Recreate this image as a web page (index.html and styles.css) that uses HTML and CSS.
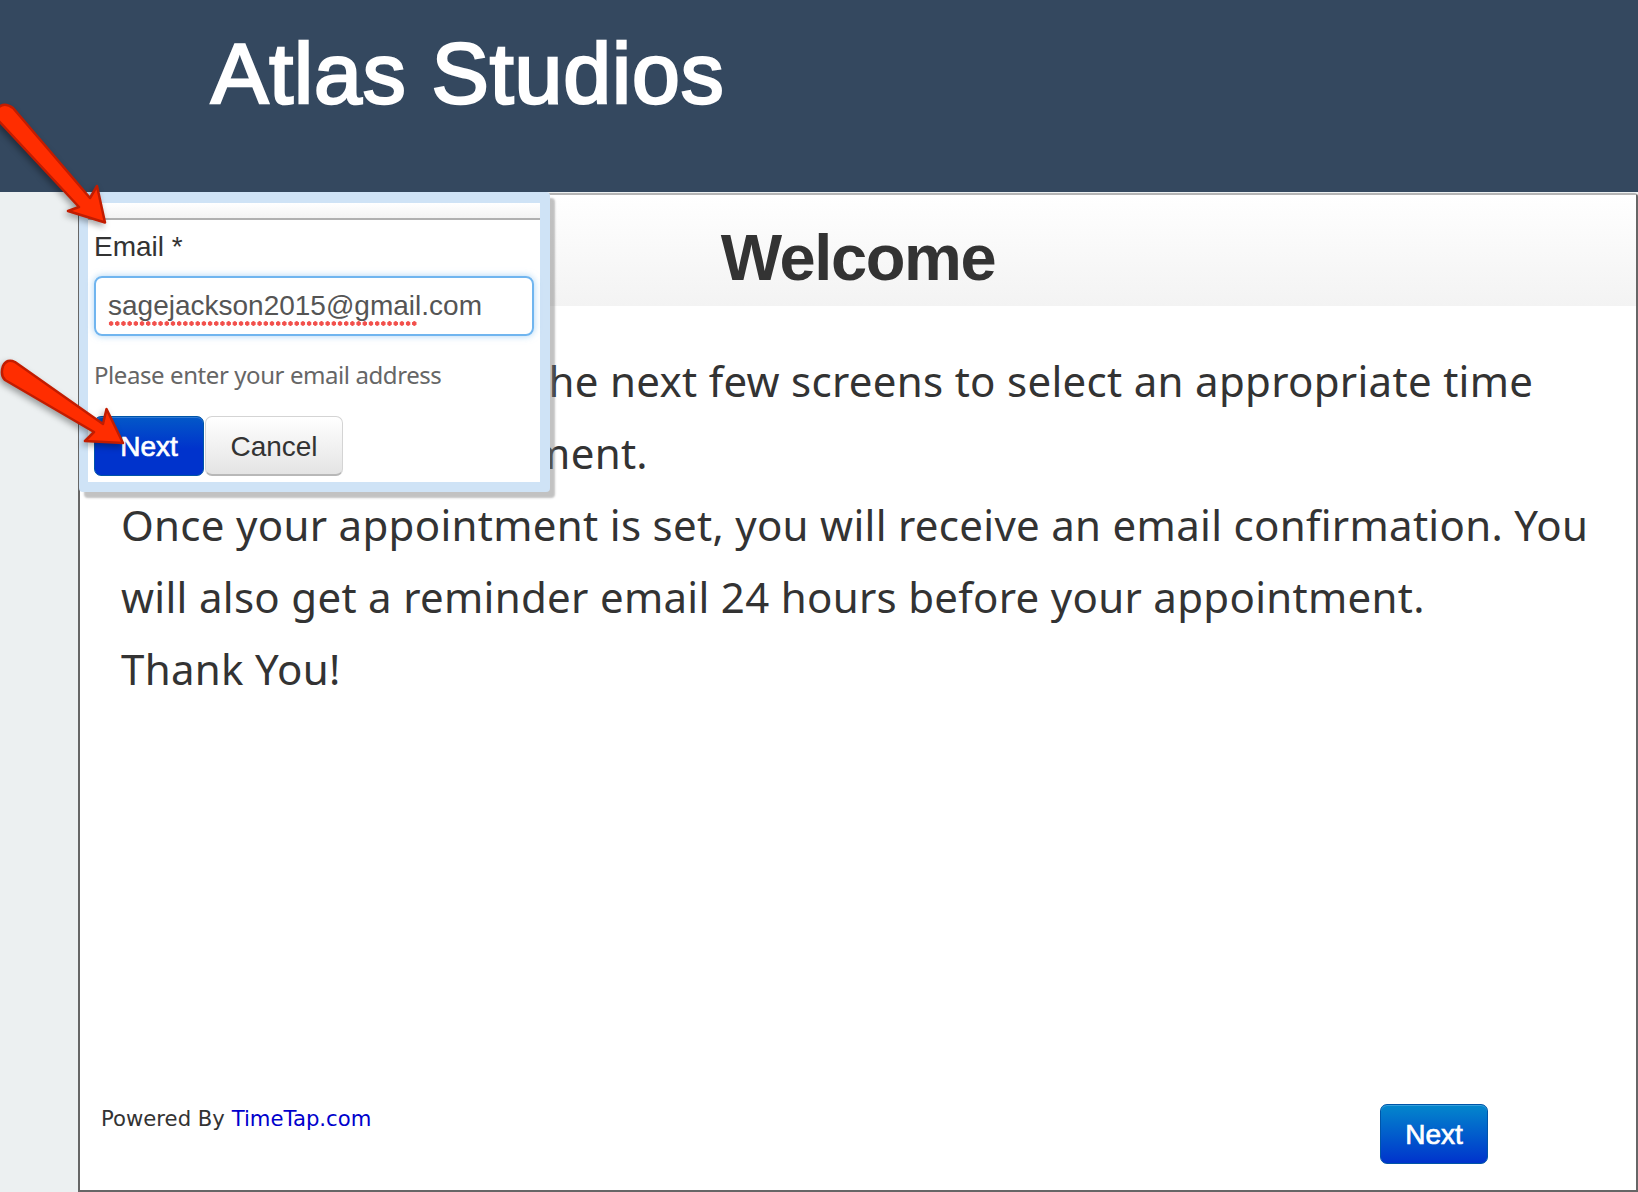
FILE: index.html
```html
<!DOCTYPE html>
<html lang="en">
<head>
<meta charset="utf-8">
<title>Atlas Studios</title>
<link rel="stylesheet" href="styles.css">
</head>
<body>
<header class="site-header"><h1 class="brand">Atlas Studios</h1></header>
<div class="shell">
  <main class="panel">
    <div class="panel-head"><h2 class="panel-title">Welcome</h2></div>
    <div class="panel-body">
      <p class="copy">Please proceed with the next few screens to select an appropriate time<br>to hold your appointment.</p>
      <p class="copy">Once your appointment is set, you will receive an email confirmation. You<br>will also get a reminder email 24 hours before your appointment.</p>
      <p class="copy">Thank You!</p>
    </div>
    <footer class="panel-foot">
      <span class="powered">Powered By <a class="powered-link" href="#">TimeTap.com</a></span>
      <button class="btn btn-primary btn-foot" type="button">Next</button>
    </footer>
  </main>
</div>

<section class="dialog">
  <div class="dialog-inner">
    <div class="dialog-bar"></div>
    <div class="dialog-body">
      <label class="field-label">Email *</label>
      <div class="field-input"><span class="misspelt">sagejackson2015@gmail</span>.com</div>
      <p class="field-help">Please enter your email address</p>
      <div class="dialog-actions">
        <button class="btn btn-primary btn-dialog" type="button">Next</button>
        <button class="btn btn-default" type="button">Cancel</button>
      </div>
    </div>
  </div>
</section>

<svg class="arrows" viewBox="0 0 1638 1192" aria-hidden="true">
  <path class="arrow" d="M-4 118 L79 207 L68 211 L105 222.5 L97 186 L90 198 L13 108 Q5 102 -1 107 Z"/>
  <path class="arrow" d="M5 380 L94 432 L85 441 L123 443 L106.5 409 L103 424 L15 362 Q7 358 3 366 Q0 375 5 380 Z"/>
</svg>
</body>
</html>
```
FILE: styles.css
```css
* { box-sizing: border-box; }
html, body { margin: 0; height: 1192px; overflow: hidden; }
body { background: #ecf0f1; font-family: "Liberation Sans", Arial, sans-serif; position: relative; }

.site-header { height: 192px; background: #34485f; padding: 27px 0 0 211px; }
.brand { margin: 0; color: #fff; font-size: 86px; line-height: 92px; font-weight: 400; letter-spacing: 0.9px; -webkit-text-stroke: 2.6px #fff; }

.shell { display: flex; height: 1000px; padding: 1px 0 0 78px; }
.panel { flex: 1; display: flex; flex-direction: column; background: #fff; border: 2px solid #666; border-top-color: #b5b5b5; border-right-color: #666; border-radius: 4px 4px 0 0; }
.panel-head { height: 111px; background: linear-gradient(#fff, #f3f3f3); text-align: center; padding-top: 27px; }
.panel-title { margin: 0; font-size: 65px; line-height: 72px; font-weight: 700; letter-spacing: -1.4px; color: #333; }
.panel-body { padding: 39px 0 0 41px; flex: 1; }
.copy { margin: 0; font-family: "Noto Sans", sans-serif; font-size: 42px; line-height: 72px; letter-spacing: 0.3px; color: #333; white-space: nowrap; }
.panel-foot { display: flex; justify-content: space-between; padding: 0 148px 26px 21px; align-items: flex-start; }
.powered { font-family: "DejaVu Sans", sans-serif; font-size: 21.2px; line-height: 26px; color: #333; margin-top: 2px; }
.powered-link { color: #0000cc; text-decoration: none; }

.btn { font-family: "Liberation Sans", Arial, sans-serif; font-size: 28px; height: 60px; padding: 2px 0 0; border-radius: 7px; cursor: pointer; }
.btn-primary { color: #fff; -webkit-text-stroke: 0.7px #fff; border: 1px solid #0055a8; }
.btn-foot { width: 108px; background: linear-gradient(#0387cc, #0033cc); box-shadow: inset 0 1px 0 #36a0dc; }
.btn-dialog { width: 110px; background: linear-gradient(#0358c8, #0033cc 55%); box-shadow: inset 0 1px 0 #2f78d4; }
.btn-default { width: 138px; color: #333; background: linear-gradient(#fff, #e4e4e4); border: 1px solid #d4d4d4; border-bottom: 2px solid #b8b8b8; }

.dialog { position: absolute; left: 79px; top: 192px; width: 471px; height: 300px; padding: 11px 10px 10px 9px; background: #cfe3f6; border-radius: 0 4px 4px 4px; box-shadow: 5px 6px 2px rgba(120, 120, 120, .45); }
.dialog-inner { height: 100%; background: #fff; }
.dialog-bar { height: 17px; background: linear-gradient(#fff, #f3f3f3); border-bottom: 2px solid #b0b0b0; }
.dialog-body { padding: 9px 6px 0 6px; }
.field-label { display: block; font-size: 28px; line-height: 36px; color: #333; }
.field-input { height: 60px; margin-top: 11px; padding: 0 12px; border: 2px solid #70b5ef; border-radius: 8px; font-size: 28px; line-height: 56px; color: #555; box-shadow: 0 0 7px rgba(112, 181, 239, .6); }
.misspelt { position: relative; display: inline-block; line-height: 40px; }
.misspelt::after { content: ""; position: absolute; left: 0; bottom: 0; width: 310px; height: 5px; background: radial-gradient(circle, #f2504c 2px, transparent 2.5px) left center / 6.2px 5px repeat-x; }
.field-help { margin: 21px 0 0; font-family: "Noto Sans", sans-serif; font-size: 24px; line-height: 36px; letter-spacing: -0.42px; color: #666; }
.dialog-actions { display: flex; gap: 1px; margin-top: 23px; }

.arrows { position: absolute; left: 0; top: 0; width: 1638px; height: 1192px; pointer-events: none; filter: drop-shadow(-2px 3px 3px rgba(0, 0, 0, .35)); }
.arrow { fill: #ff2d00; stroke: #c21c00; stroke-width: 2.5; stroke-linejoin: round; }
```
